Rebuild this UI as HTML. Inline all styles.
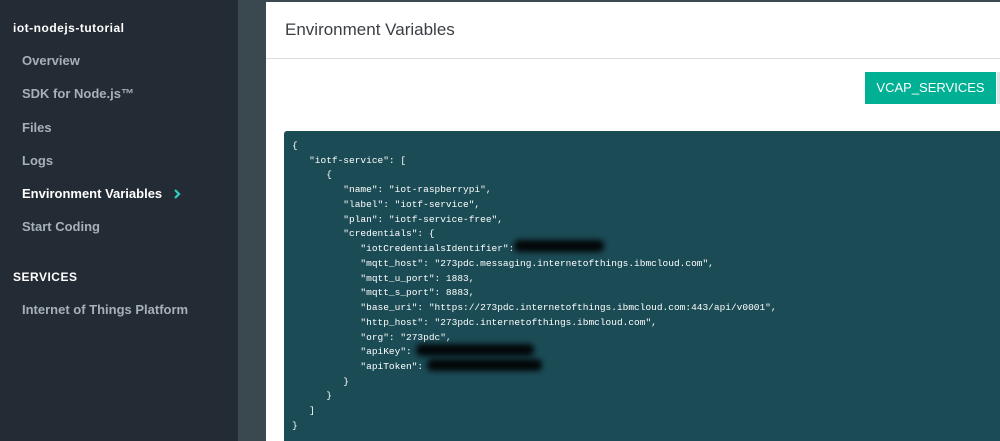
<!DOCTYPE html>
<html><head><style>
body{margin:0;width:1000px;height:441px;overflow:hidden;background:#3a4850;font-family:"Liberation Sans",sans-serif;position:relative}
.side{position:absolute;left:0;top:0;width:238px;height:441px;background:#232b34}
.side div{position:absolute;font-weight:bold}
.h{left:13px;font-size:12px;color:#fff;letter-spacing:.5px}
.i{left:22px;font-size:13px;color:#a7b0b8}
.panel{position:absolute;left:266px;top:2px;width:734px;height:439px;background:#fff}
.title{position:absolute;left:19px;top:18px;font-size:17px;color:#3b3f44}
.sep{position:absolute;left:0;top:56px;width:734px;height:1px;background:#dcdcdc}
.btn{position:absolute;left:599px;top:70px;width:131px;height:32px;background:#00b095;color:#fff;font-size:13px;text-align:center;line-height:32px}
.grey{position:absolute;left:731px;top:70px;width:3px;height:32px;background:#dde3e6}
.code{position:absolute;left:18px;top:129px;width:716px;height:310px;background:#1b4b55;border-radius:3px 0 0 0}
pre{margin:0;position:absolute;left:8px;top:8px;font-family:"Liberation Mono",monospace;font-size:9.5px;line-height:14.74px;color:#fff}
.r{position:absolute;background:#000;filter:blur(3px);border-radius:5px;opacity:.9}
</style></head><body>
<div class="side">
<div class="h" style="top:21px">iot-nodejs-tutorial</div>
<div class="i" style="top:53px">Overview</div>
<div class="i" style="top:86px">SDK for Node.js™</div>
<div class="i" style="top:120px">Files</div>
<div class="i" style="top:153px">Logs</div>
<div class="i" style="top:186px;color:#fff">Environment Variables</div>
<svg style="position:absolute;left:173px;top:188px" width="8" height="12" viewBox="0 0 8 12"><path d="M2 2l4 4-4 4" stroke="#2ed0c0" stroke-width="2.2" fill="none"/></svg>
<div class="i" style="top:219px">Start Coding</div>
<div class="h" style="top:270px">SERVICES</div>
<div class="i" style="top:302px">Internet of Things Platform</div>
</div>
<div class="panel">
<div class="title">Environment Variables</div>
<div class="sep"></div>
<div class="btn">VCAP_SERVICES</div><div class="grey"></div>
<div class="code"><pre>{
   "iotf-service": [
      {
         "name": "iot-raspberrypi",
         "label": "iotf-service",
         "plan": "iotf-service-free",
         "credentials": {
            "iotCredentialsIdentifier": 
            "mqtt_host": "273pdc.messaging.internetofthings.ibmcloud.com",
            "mqtt_u_port": 1883,
            "mqtt_s_port": 8883,
            "base_uri": "https://273pdc.internetofthings.ibmcloud.com:443/api/v0001",
            "http_host": "273pdc.internetofthings.ibmcloud.com",
            "org": "273pdc",
            "apiKey": 
            "apiToken": 
         }
      }
   ]
}</pre>
<div class="r" style="left:230px;top:109px;width:90px;height:12px"></div>
<div class="r" style="left:132px;top:213px;width:118px;height:12px"></div>
<div class="r" style="left:143px;top:228px;width:115px;height:12px"></div>
</div>
</div>
</body></html>
